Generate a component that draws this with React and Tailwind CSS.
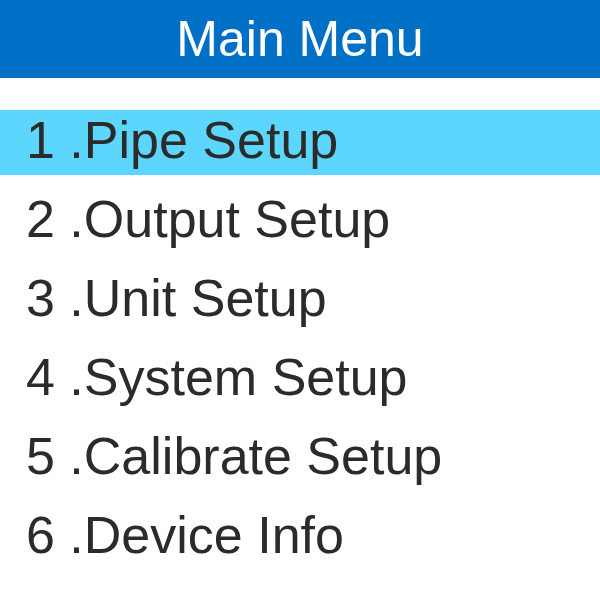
export default function App() {
  const items = [
    "1 .Pipe Setup",
    "2 .Output Setup",
    "3 .Unit Setup",
    "4 .System Setup",
    "5 .Calibrate Setup",
    "6 .Device Info",
  ];
  return (
    <div className="w-[600px] h-[600px] bg-white overflow-hidden" style={{ fontFamily: '"Liberation Sans", Arial, sans-serif' }}>
      <div className="h-[78px] bg-[#0070c6] flex items-center justify-center">
        <span className="text-white text-[50px] leading-none">Main Menu</span>
      </div>
      <div className="mt-[32px] flex flex-col gap-[14px]">
        {items.map((t, i) => (
          <div
            key={t}
            className={`h-[65px] pl-[26px] text-[52px] leading-[60px] text-[#2b2b2b] whitespace-pre ${i === 0 ? "bg-[#5dd6fe]" : ""}`}
          >
            {t}
          </div>
        ))}
      </div>
    </div>
  );
}
